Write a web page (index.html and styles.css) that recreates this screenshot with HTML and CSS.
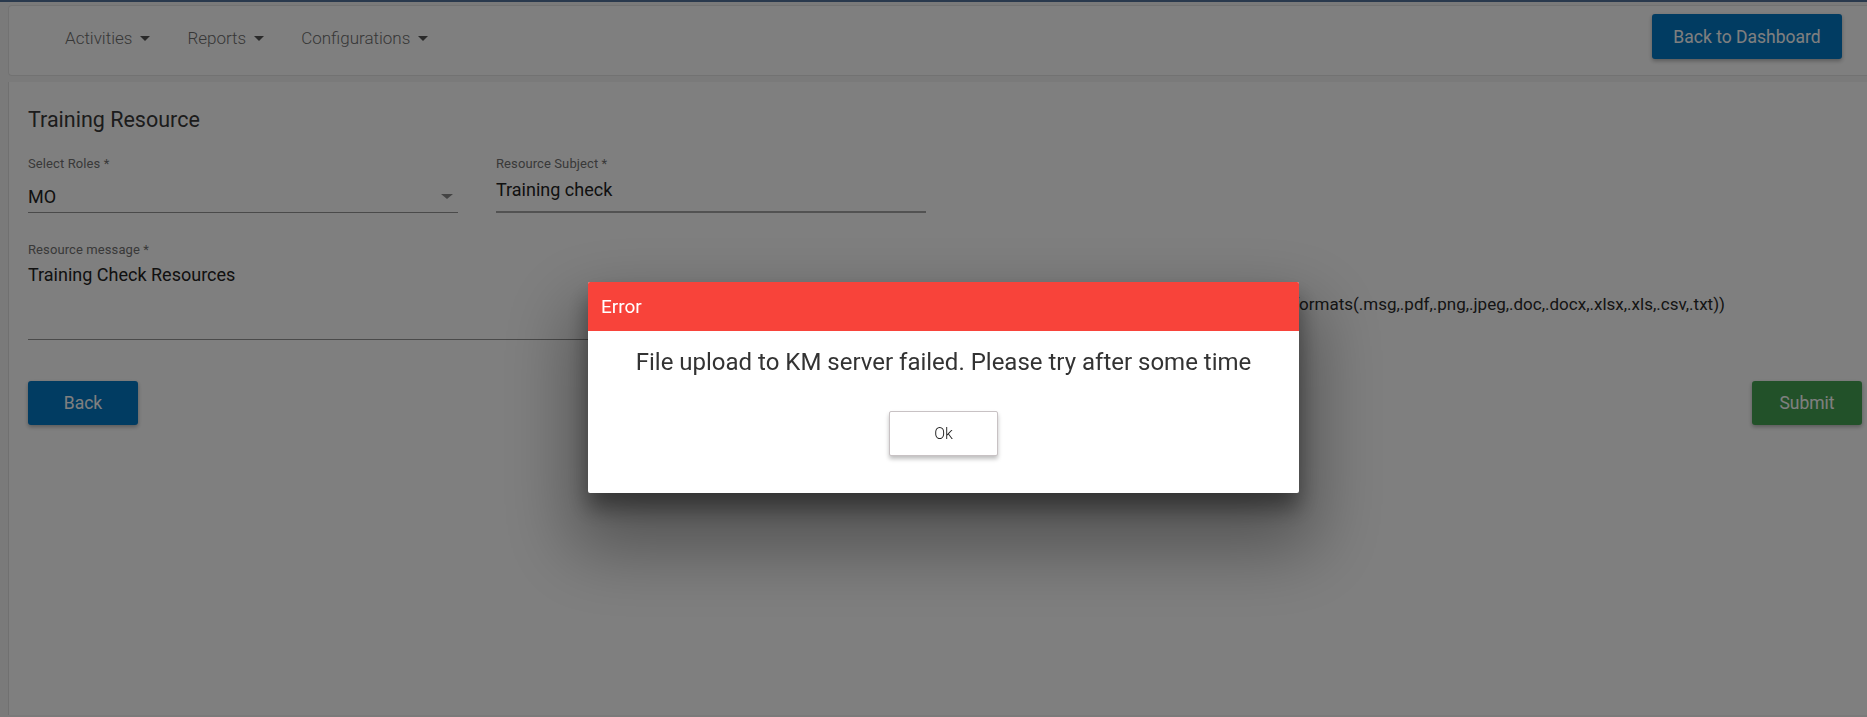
FILE: index.html
```html
<!DOCTYPE html>
<html>
<head>
    <meta charset="UTF-8">
    <link rel="stylesheet" href="styles.css">
</head>
<body>
    <nav class="navbar">
        <ul class="nav-menu">
            <li class="nav-item">Activities<span class="caret"></span></li>
            <li class="nav-item">Reports<span class="caret"></span></li>
            <li class="nav-item">Configurations<span class="caret"></span></li>
        </ul>
        <button class="btn btn-blue btn-dashboard">Back to Dashboard</button>
    </nav>

    <main class="card">
        <h3 class="card-title">Training Resource</h3>

        <div class="form-row">
            <div class="field field-select">
                <label class="field-label">Select Roles *</label>
                <div class="field-value">MO <span class="select-arrow"></span></div>
            </div>
            <div class="field field-input">
                <label class="field-label">Resource Subject *</label>
                <div class="field-value">Training check</div>
            </div>
        </div>

        <div class="form-row message-row">
            <div class="field field-textarea">
                <label class="field-label">Resource message *</label>
                <div class="field-value">Training Check Resources</div>
            </div>
            <div class="upload-note">Attach file (Supported formats(.msg,.pdf,.png,.jpeg,.doc,.docx,.xlsx,.xls,.csv,.txt))</div>
        </div>

        <div class="actions">
            <button class="btn btn-blue">Back</button>
            <button class="btn btn-green">Submit</button>
        </div>
    </main>

    <div class="overlay"></div>

    <div class="dialog">
        <div class="dialog-header">Error</div>
        <div class="dialog-body">
            <p class="dialog-message">File upload to KM server failed. Please try after some time</p>
            <button class="btn-ok">Ok</button>
        </div>
    </div>
</body>
</html>
```

FILE: styles.css
```css
* {
    box-sizing: border-box;
}

body {
    margin: 0;
    min-height: 100vh;
    font-family: Roboto, "Liberation Sans", sans-serif;
    background: #f4f4f4;
    border-top: 2px solid #52739a;
    color: #333;
}

/* top navigation */
.navbar {
    display: flex;
    align-items: flex-start;
    height: 71px;
    margin: 3px 0 0 8px;
    background: #fff;
    border: 1px solid #e4e4e4;
    border-right: none;
    border-radius: 4px 0 0 4px;
}

.nav-menu {
    display: flex;
    align-items: center;
    gap: 37px;
    height: 100%;
    margin: 0;
    padding: 0 0 6px 56px;
    list-style: none;
}

.nav-item {
    display: flex;
    align-items: center;
    gap: 8px;
    font-size: 17px;
    font-weight: 300;
    color: #6e6e6e;
}

.caret {
    width: 0;
    height: 0;
    margin-top: 2px;
    border-left: 5px solid transparent;
    border-right: 5px solid transparent;
    border-top: 5px solid #555;
}

.btn {
    height: 44px;
    padding: 0 16px;
    border: none;
    border-radius: 3px;
    color: #fff;
    font-family: inherit;
    font-size: 17.5px;
    box-shadow: 0 2px 4px rgba(0, 0, 0, 0.3);
}

.btn-blue {
    background: #0378c4;
}

.btn-green {
    background: #44a352;
}

.btn-dashboard {
    width: 190px;
    height: 45px;
    margin: 8px 25px 0 auto;
}

/* form card */
.card {
    min-height: calc(100vh - 84px);
    margin: 6px 0 0 8px;
    padding: 25px 0 0 19px;
    background: #fff;
    border-left: 1px solid #e0e0e0;
}

.card-title {
    margin: 0;
    font-size: 21.5px;
    font-weight: 400;
    line-height: 25px;
    color: #383838;
}

.form-row {
    display: flex;
    gap: 38px;
    margin-top: 25px;
}

.field {
    width: 430px;
}

.field-label {
    display: block;
    font-size: 13px;
    line-height: 14px;
    letter-spacing: 0.1px;
    color: #727272;
}

.field-value {
    display: flex;
    align-items: center;
    justify-content: space-between;
    height: 42px;
    padding: 10px 0 0;
    font-size: 18px;
    color: #222;
    border-bottom: 1px solid #949494;
}

.field-input .field-value {
    align-items: flex-start;
    padding-top: 8px;
    border-bottom: 2px solid #a4a4a4;
}

.select-arrow {
    width: 0;
    height: 0;
    margin-right: 5px;
    border-left: 6px solid transparent;
    border-right: 6px solid transparent;
    border-top: 5px solid #888;
}

.message-row {
    margin-top: 30px;
}

.field-textarea {
    width: 860px;
}

.field-textarea .field-value {
    align-items: flex-start;
    height: 83px;
    padding-top: 7px;
}

.upload-note {
    flex: 1;
    padding: 51px 142px 0 0;
    text-align: right;
    font-size: 17px;
    color: #2a2a2a;
    white-space: nowrap;
}

.actions {
    display: flex;
    justify-content: space-between;
    margin-top: 41px;
    padding-right: 5px;
}

.actions .btn {
    width: 110px;
}

/* modal */
.overlay {
    position: fixed;
    top: 0;
    left: 0;
    right: 0;
    bottom: 0;
    background: rgba(0, 0, 0, 0.5);
}

.dialog {
    position: fixed;
    top: 282px;
    left: 588px;
    width: 711px;
    height: 211px;
    background: #fff;
    border-radius: 2px;
    box-shadow: 0 15px 22px rgba(0, 0, 0, 0.4), 0 40px 70px 16px rgba(0, 0, 0, 0.35);
    overflow: hidden;
}

.dialog-header {
    height: 49px;
    padding-left: 13px;
    background: #f8433a;
    color: #fff;
    font-size: 19px;
    line-height: 49px;
}

.dialog-body {
    padding-top: 17px;
    text-align: center;
}

.dialog-message {
    margin: 0;
    font-size: 24px;
    line-height: 28px;
    color: #333;
}

.btn-ok {
    width: 109px;
    height: 45px;
    margin-top: 35px;
    background: #fff;
    border: 1px solid #c8c2c4;
    border-radius: 2px;
    font-family: inherit;
    font-size: 16px;
    font-weight: 300;
    color: #222;
    box-shadow: 0 3px 4px rgba(0, 0, 0, 0.25);
}
```
